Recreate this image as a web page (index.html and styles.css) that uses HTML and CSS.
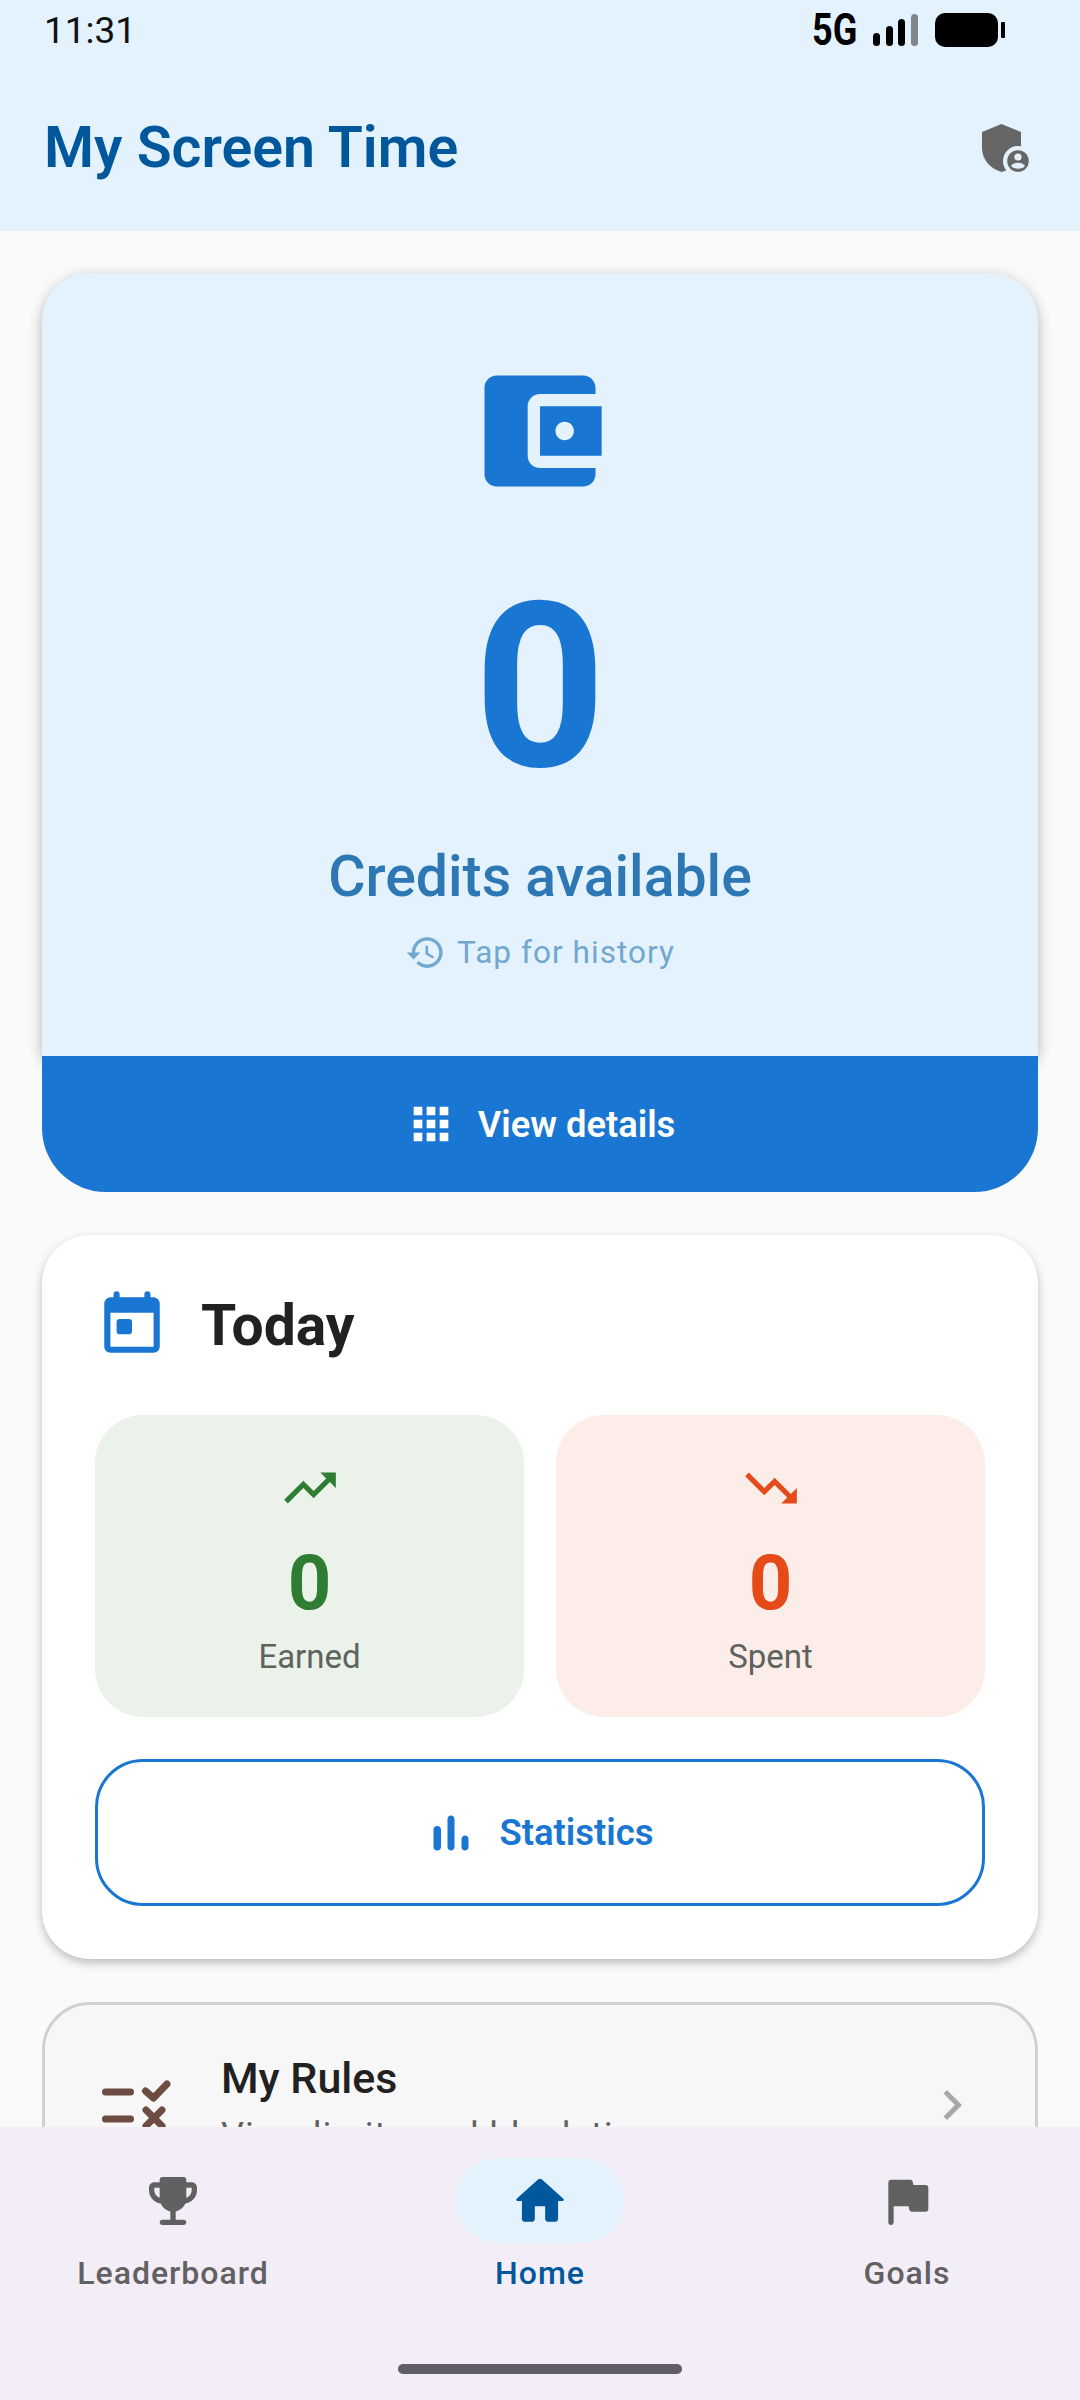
FILE: index.html
```html
<!doctype HTML>
<html>
  <head>
    <title>My Screen Time</title>
    <link rel="stylesheet" href="styles.css">
  </head>
  <body>
    <div class="screen">
      <div class="topbar">
        <div class="status">
          <span class="clock">11:31</span>
          <div class="status-right">
            <span class="network">5G</span>
            <svg class="signal" width="46" height="32" viewBox="0 0 46 32">
              <rect x="0" y="19" width="7" height="13" rx="3.500"/>
              <rect x="13" y="12" width="7" height="20" rx="3.500"/>
              <rect x="25" y="5" width="7" height="27" rx="3.500"/>
              <rect x="38" y="0" width="7" height="32" rx="3.500" fill="#80868b"/>
            </svg>
            <svg class="battery" width="70" height="34" viewBox="0 0 70 34">
              <rect x="0" y="0" width="63" height="34" rx="10"/>
              <rect x="66" y="9" width="4" height="16" rx="1"/>
            </svg>
          </div>
        </div>
        <div class="appbar">
          <h1>My Screen Time</h1>
          <svg class="shield" width="48" height="48" viewBox="0 0 48 48">
            <path d="M19.500 0 L39 8 V24 C39 36 30 45 19.500 48 C9 45 0 36 0 24 V8 Z" fill="#666"/>
            <circle cx="36" cy="37" r="15" fill="#e3f2fd"/>
            <circle cx="36" cy="37" r="10.800" fill="#666"/>
            <circle cx="36" cy="33" r="3.600" fill="#e3f2fd"/>
            <path d="M29 42 C31 37.500 41 37.500 43 42 C40 45.500 32 45.500 29 42 Z" fill="#e3f2fd"/>
          </svg>
        </div>
      </div>

      <div class="content">
        <div class="hero">
          <div class="hero-body">
            <svg class="wallet" width="148" height="148" viewBox="0 0 24 24">
              <path d="M21 18v1c0 1.100-.9 2-2 2H5c-1.110 0-2-.9-2-2V5c0-1.100.89-2 2-2h14c1.100 0 2 .9 2 2v1h-9c-1.110 0-2 .9-2 2v8c0 1.100.89 2 2 2h9zm-9-2h10V8H12v8zm4-2.500c-.83 0-1.500-.67-1.500-1.500s.67-1.500 1.500-1.500 1.500.67 1.500 1.500-.67 1.500-1.500 1.500z"/>
            </svg>
            <div class="credits">0</div>
            <div class="credits-label">Credits available</div>
            <div class="history">
              <svg width="41" height="41" viewBox="0 0 24 24">
                <path d="M13 3a9 9 0 0 0-9 9H1l3.890 3.890.07.14L9 12H6c0-3.870 3.130-7 7-7s7 3.130 7 7-3.130 7-7 7c-1.930 0-3.680-.79-4.940-2.060l-1.420 1.420A8.954 8.954 0 0 0 13 21a9 9 0 0 0 0-18zm-1 5v5l4.280 2.540.72-1.210-3.500-2.080V8H12z"/>
              </svg>
              <span>Tap for history</span>
            </div>
          </div>
          <div class="hero-foot">
            <svg width="52" height="52" viewBox="0 0 24 24">
              <path d="M4 8h4V4H4v4zm6 12h4v-4h-4v4zm-6 0h4v-4H4v4zm0-6h4v-4H4v4zm6 0h4v-4h-4v4zm6-10v4h4V4h-4zm-6 4h4V4h-4v4zm6 6h4v-4h-4v4zm0 6h4v-4h-4v4z"/>
            </svg>
            <span>View details</span>
          </div>
        </div>

        <div class="today">
          <div class="today-head">
            <svg width="74" height="74" viewBox="0 0 24 24">
              <path d="M19 4h-1V3a1 1 0 0 0-2 0V4H8V3a1 1 0 0 0-2 0V4H5a2 2 0 0 0-2 2v14a2 2 0 0 0 2 2h14a2 2 0 0 0 2-2V6a2 2 0 0 0-2-2zm0 16H5V9h14v11zM8 11h3a1 1 0 0 1 1 1v3a1 1 0 0 1-1 1H8a1 1 0 0 1-1-1v-3a1 1 0 0 1 1-1z"/>
            </svg>
            <h2>Today</h2>
          </div>
          <div class="tiles">
            <div class="tile tile-earned">
              <svg width="62" height="62" viewBox="0 0 24 24">
                <path d="M16 6l2.290 2.290-4.880 4.880-4-4L2 16.590 3.410 18l6-6 4 4 6.300-6.290L22 12V6z"/>
              </svg>
              <div class="tile-num">0</div>
              <div class="tile-label">Earned</div>
            </div>
            <div class="tile tile-spent">
              <svg width="62" height="62" viewBox="0 0 24 24">
                <path d="M16 18l2.290-2.290-4.880-4.880-4 4L2 7.410 3.410 6l6 6 4-4 6.300 6.290L22 12v6z"/>
              </svg>
              <div class="tile-num">0</div>
              <div class="tile-label">Spent</div>
            </div>
          </div>
          <div class="stats-btn">
            <svg width="60" height="60" viewBox="0 0 24 24">
              <path d="M6.400 9.200h.2c.77 0 1.400.63 1.400 1.400v7c0 .77-.63 1.400-1.400 1.400h-.2c-.77 0-1.400-.63-1.400-1.400v-7c0-.77.63-1.400 1.400-1.400zM12 5c.77 0 1.400.63 1.400 1.400v11.200c0 .77-.63 1.400-1.400 1.400s-1.400-.63-1.400-1.400V6.400c0-.77.63-1.400 1.400-1.400zm5.600 8c.77 0 1.400.63 1.400 1.400v3.200c0 .77-.63 1.400-1.400 1.400s-1.400-.63-1.400-1.400v-3.200c0-.77.63-1.400 1.400-1.400z"/>
            </svg>
            <span>Statistics</span>
          </div>
        </div>

        <div class="rules">
          <svg class="rules-icon" width="72" height="72" viewBox="0 0 72 72">
            <path d="M5.500 17H30.500M5.500 44H30.500M45.500 16L53.500 23L67 9M46 35L62 51M62 35L46 51"/>
          </svg>
          <div class="rules-text">
            <div class="rules-title">My Rules</div>
            <div class="rules-sub">View limits and block time</div>
          </div>
          <svg class="chevron" width="60" height="60" viewBox="0 0 24 24">
            <path d="M8.590 16.590 13.170 12 8.590 7.410 10 6l6 6-6 6z"/>
          </svg>
        </div>
      </div>

      <div class="nav">
        <div class="nav-items">
          <div class="nav-item">
            <div class="nav-icon">
              <svg width="64" height="64" viewBox="0 0 24 24">
                <path d="M19 5h-2V4c0-.55-.45-1-1-1H8c-.55 0-1 .45-1 1v1H5c-1.100 0-2 .9-2 2v1c0 2.550 1.920 4.630 4.390 4.940.63 1.500 1.980 2.630 3.610 2.960V19H8c-.55 0-1 .45-1 1s.45 1 1 1h8c.55 0 1-.45 1-1s-.45-1-1-1h-3v-3.100c1.630-.33 2.980-1.460 3.610-2.960C19.080 12.630 21 10.550 21 8V7c0-1.100-.9-2-2-2zM5 8V7h2v3.820C5.840 10.400 5 9.300 5 8zm14 0c0 1.300-.84 2.400-2 2.820V7h2v1z"/>
              </svg>
            </div>
            <span>Leaderboard</span>
          </div>
          <div class="nav-item active">
            <div class="nav-icon">
              <svg width="62" height="62" viewBox="0 0 24 24">
                <path d="M10 19v-5h4v5c0 .55.45 1 1 1h3c.55 0 1-.45 1-1v-7h1.700c.46 0 .68-.57.33-.87L12.670 3.600c-.38-.34-.96-.34-1.340 0l-8.360 7.530c-.34.3-.13.87.33.87H5v7c0 .55.45 1 1 1h3c.55 0 1-.45 1-1z"/>
              </svg>
            </div>
            <span>Home</span>
          </div>
          <div class="nav-item">
            <div class="nav-icon">
              <svg width="64" height="64" viewBox="0 0 24 24">
                <path d="M14.400 6l-.24-1.200c-.09-.46-.5-.8-.98-.8H6c-.55 0-1 .45-1 1v15c0 .55.45 1 1 1s1-.45 1-1v-6h5.600l.24 1.200c.09.47.5.8.98.8H19c.55 0 1-.45 1-1V7c0-.55-.45-1-1-1h-4.600z"/>
              </svg>
            </div>
            <span>Goals</span>
          </div>
        </div>
        <div class="home-bar"></div>
      </div>
    </div>
  </body>
</html>
```

FILE: styles.css
```css
body {
  margin: 0;
  padding: 0;
  font-family: Roboto, 'Noto Sans', sans-serif;
  background-color: #fafafa;
}
.screen {
  width: 1080px;
  height: 2400px;
  display: flex;
  flex-direction: column;
  overflow: hidden;
}

/* top */
.topbar {
  height: 231px;
  flex: none;
  background-color: #e3f2fd;
  padding: 0 44px;
  box-sizing: border-box;
}
.status {
  height: 60px;
  display: flex;
  align-items: center;
  justify-content: space-between;
}
.clock {
  font-size: 37px;
  color: #111;
}
.status-right {
  display: flex;
  align-items: center;
  gap: 16px;
  margin-right: 31px;
}
.network {
  font-size: 44px;
  line-height: 1;
  font-weight: 700;
  color: #000;
  transform: scaleX(0.82);
  margin: 0 -5px;
}
.signal, .battery {
  fill: #000;
}
.appbar {
  height: 171px;
  box-sizing: border-box;
  padding-top: 4px;
  display: flex;
  align-items: center;
  justify-content: space-between;
}
.appbar h1 {
  margin: 0;
  font-size: 57.2px;
  font-weight: 600;
  color: #01579b;
}
.shield {
  margin-right: 6px;
}

/* scrolling part */
.content {
  flex: 1;
  min-height: 0;
  overflow: hidden;
  padding: 42px 42px 0;
  display: flex;
  flex-direction: column;
  gap: 43px;
}
.hero {
  flex: none;
}
.hero-body {
  height: 783px;
  background-color: #e3f2fd;
  border-radius: 48px 48px 0 0;
  box-shadow: 0 4px 14px rgba(0, 0, 0, 0.28);
  display: flex;
  flex-direction: column;
  align-items: center;
  box-sizing: border-box;
  padding-top: 84px;
}
.wallet {
  fill: #1976d2;
}
.credits {
  font-size: 230px;
  font-weight: 700;
  line-height: 270px;
  color: #1976d2;
  margin-top: 48px;
}
.credits-label {
  font-size: 57.2px;
  font-weight: 500;
  line-height: 72px;
  color: #2d78b4;
  margin-top: 18px;
}
.history {
  display: flex;
  align-items: center;
  gap: 11px;
  margin-top: 19px;
  font-size: 31.5px;
  letter-spacing: 1.05px;
  color: #72a7d0;
}
.history svg {
  fill: #72a7d0;
}
.hero-foot {
  position: relative;
  height: 136px;
  box-sizing: border-box;
  background-color: #1976d2;
  border-radius: 0 0 64px 64px;
  color: #fff;
  display: flex;
  align-items: center;
  justify-content: center;
  gap: 21px;
  font-size: 36.3px;
  font-weight: 600;
}
.hero-foot svg {
  fill: #fff;
}

.today {
  flex: none;
  background-color: #fff;
  border-radius: 48px;
  padding: 45px 53px 53px;
  box-shadow: 0 4px 10px rgba(0, 0, 0, 0.25);
}
.today-head {
  display: flex;
  align-items: center;
  gap: 32px;
  height: 90px;
}
.today-head svg {
  fill: #1976d2;
  margin-top: -6px;
}
.today-head h2 {
  margin: 0;
  font-size: 57px;
  font-weight: 700;
  color: #212121;
}
.tiles {
  display: grid;
  grid-template-columns: 1fr 1fr;
  gap: 32px;
  margin-top: 45px;
}
.tile {
  height: 302px;
  border-radius: 48px;
  display: flex;
  flex-direction: column;
  align-items: center;
  box-sizing: border-box;
  padding-top: 42px;
}
.tile-earned {
  background-color: #eaf2ea;
  color: #2e7d32;
  fill: #2e7d32;
}
.tile-spent {
  background-color: #fcede9;
  color: #e64a19;
  fill: #e64a19;
}
.tile-num {
  font-size: 76px;
  font-weight: 700;
  line-height: 90px;
  margin-top: 19px;
}
.tile-label {
  font-size: 33px;
  color: #5f6360;
  margin-top: 9px;
}
.stats-btn {
  height: 147px;
  margin-top: 42px;
  box-sizing: border-box;
  border: 3px solid #1976d2;
  border-radius: 48px;
  padding-right: 5px;
  display: flex;
  align-items: center;
  justify-content: center;
  gap: 18px;
  color: #1976d2;
  fill: #1976d2;
  font-size: 36.5px;
  font-weight: 600;
}

.rules {
  flex: none;
  height: 220px;
  box-sizing: border-box;
  border: 3px solid #d0d0d0;
  border-radius: 48px;
  background-color: #f7f7f7;
  display: flex;
  align-items: flex-start;
  padding: 70px 53px 0 55px;
  gap: 49px;
}
.rules-icon {
  flex: none;
  fill: none;
  stroke: #6d4c41;
  stroke-width: 7;
  stroke-linecap: round;
  stroke-linejoin: round;
}
.rules-text {
  flex: 1;
  margin-top: -22px;
}
.rules-title {
  font-size: 43px;
  line-height: 50px;
  font-weight: 500;
  color: #212121;
}
.rules-sub {
  font-size: 36px;
  letter-spacing: 1px;
  color: #616161;
  margin-top: 12px;
}
.chevron {
  flex: none;
  fill: #a8a8a8;
}

/* bottom nav */
.nav {
  height: 273px;
  flex: none;
  background-color: #f3edf7;
  position: relative;
}
.nav-items {
  display: grid;
  grid-template-columns: repeat(3, 367px);
  justify-content: center;
  padding-top: 31px;
}
.nav-item {
  display: flex;
  flex-direction: column;
  align-items: center;
  font-size: 32px;
  font-weight: 500;
  letter-spacing: 1px;
  color: #616161;
  fill: #616161;
  gap: 11px;
}
.nav-icon {
  width: 168px;
  height: 85px;
  border-radius: 43px;
  display: flex;
  align-items: center;
  justify-content: center;
}
.nav-item.active {
  color: #01579b;
  fill: #01579b;
}
.nav-item.active .nav-icon {
  background-color: #e3f2fd;
}
.home-bar {
  position: absolute;
  left: 398px;
  bottom: 26px;
  width: 284px;
  height: 10px;
  border-radius: 5px;
  background-color: #605e64;
}
```
